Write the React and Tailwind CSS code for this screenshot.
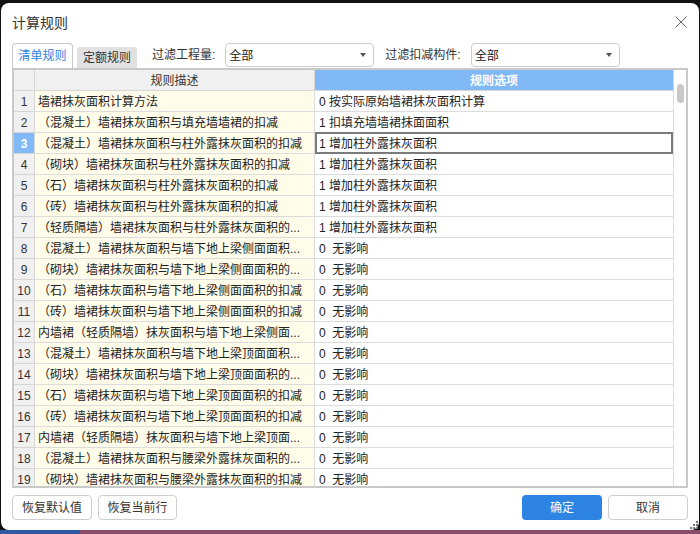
import React from 'react';

const rows = [
    ["墙裙抹灰面积计算方法", "0 按实际原始墙裙抹灰面积计算"],
    ["（混凝土）墙裙抹灰面积与填充墙墙裙的扣减", "1 扣填充墙墙裙抹面面积"],
    ["（混凝土）墙裙抹灰面积与柱外露抹灰面积的扣减", "1 增加柱外露抹灰面积"],
    ["（砌块）墙裙抹灰面积与柱外露抹灰面积的扣减", "1 增加柱外露抹灰面积"],
    ["（石）墙裙抹灰面积与柱外露抹灰面积的扣减", "1 增加柱外露抹灰面积"],
    ["（砖）墙裙抹灰面积与柱外露抹灰面积的扣减", "1 增加柱外露抹灰面积"],
    ["（轻质隔墙）墙裙抹灰面积与柱外露抹灰面积的...", "1 增加柱外露抹灰面积"],
    ["（混凝土）墙裙抹灰面积与墙下地上梁侧面面积...", "0  无影响"],
    ["（砌块）墙裙抹灰面积与墙下地上梁侧面面积的...", "0  无影响"],
    ["（石）墙裙抹灰面积与墙下地上梁侧面面积的扣减", "0  无影响"],
    ["（砖）墙裙抹灰面积与墙下地上梁侧面面积的扣减", "0  无影响"],
    ["内墙裙（轻质隔墙）抹灰面积与墙下地上梁侧面...", "0  无影响"],
    ["（混凝土）墙裙抹灰面积与墙下地上梁顶面面积...", "0  无影响"],
    ["（砌块）墙裙抹灰面积与墙下地上梁顶面面积的...", "0  无影响"],
    ["（石）墙裙抹灰面积与墙下地上梁顶面面积的扣减", "0  无影响"],
    ["（砖）墙裙抹灰面积与墙下地上梁顶面面积的扣减", "0  无影响"],
    ["内墙裙（轻质隔墙）抹灰面积与墙下地上梁顶面...", "0  无影响"],
    ["（混凝土）墙裙抹灰面积与腰梁外露抹灰面积的...", "0  无影响"],
    ["（砌块）墙裙抹灰面积与腰梁外露抹灰面积的扣减", "0  无影响"],
];

const Select = ({ width }) => (
    <div className={`${width} h-[24px] border border-[#cdcdcd] rounded-[4px] flex items-center justify-between pl-[3px] pr-[7px] text-[12px] text-[#222]`}>
        <span className="pt-[1px]">全部</span>
        <svg width="6" height="4" viewBox="0 0 6 4"><path d="M0 0h6L3 4z" fill="#555" /></svg>
    </div>
);

const App = () => {
    return (
        <div className="w-[700px] h-[534px] bg-[#111] flex flex-col pt-[3px] overflow-hidden" style={{ fontFamily: '"Liberation Sans", "Noto Sans CJK SC", sans-serif' }}>
            <div className="mx-[1px] h-[527px] bg-white rounded-[8px] flex flex-col relative">
                {/* title bar */}
                <div className="h-[40px] pl-[11px] pr-[11px] flex items-center justify-between">
                    <span className="text-[14px] text-[#333] leading-none">计算规则</span>
                    <svg width="12" height="12" viewBox="0 0 12 12" className="-mt-[2px] mr-[1px]">
                        <path d="M0.5 0.5L11.5 11.5M11.5 0.5L0.5 11.5" stroke="#666" strokeWidth="1" />
                    </svg>
                </div>

                {/* toolbar */}
                <div className="h-[25px] px-[11px] flex items-start text-[12px] leading-none">
                    <div className="w-[61px] h-[25px] border border-b-0 border-[#c8c8c8] rounded-t-[4px] flex items-center justify-center text-[#2c83dc]">清单规则</div>
                    <div className="ml-[4px] mt-[4px] w-[60px] h-[21px] bg-[#e1e1e1] rounded-t-[3px] flex items-center justify-center text-[#333] pt-[1px]">定额规则</div>
                    <span className="ml-[15px] h-[24px] flex items-center text-[#333]">过滤工程量:</span>
                    <div className="ml-[10px]"><Select width="w-[149px]" /></div>
                    <span className="ml-[11px] h-[24px] flex items-center text-[#333]">过滤扣减构件:</span>
                    <div className="ml-[10px]"><Select width="w-[149px]" /></div>
                </div>

                {/* grid */}
                <div className="mx-[11px] h-[420px] border-2 border-[#c9c9c9] flex overflow-hidden text-[12px] leading-none text-[#222]">
                    <div className="w-[660px] flex flex-col">
                        <div className="h-[21px] flex shrink-0">
                            <div className="w-[21px] bg-[#f0f0f0] border-r border-b border-[#d6d6d6]" />
                            <div className="w-[280px] bg-[#f0f0f0] border-r border-b border-[#d6d6d6] flex items-center justify-center text-[#333] pt-[1px]">规则描述</div>
                            <div className="w-[359px] bg-[#80b9f6] border-r border-b border-[#d6d6d6] flex items-center justify-center text-white font-bold pt-[1px]">规则选项</div>
                        </div>
                        {rows.map(([desc, opt], i) => {
                            const selected = i === 2;
                            return (
                                <div key={i} className="h-[21px] flex shrink-0">
                                    <div className={`w-[21px] border-r border-b border-[#d6d6d6] flex items-center justify-center pt-[1px] ${selected ? "bg-[#80b9f6] text-white font-bold" : "bg-[#f0f0f0] text-[#333]"}`}>{i + 1}</div>
                                    <div className="w-[280px] bg-[#fffcea] border-r border-b border-[#dcdcdc] flex items-center pl-[3px] pt-[1px] whitespace-nowrap overflow-hidden">{desc}</div>
                                    <div className="w-[359px] bg-white border-r border-b border-[#dcdcdc] flex items-center pl-[4px] pt-[1px] whitespace-pre relative">
                                        {opt}
                                        {selected && <div className="absolute -top-[1px] left-0 right-0 -bottom-[1px] border-2 border-[#7b7b7b]" />}
                                    </div>
                                </div>
                            );
                        })}
                    </div>
                    <div className="w-[14px] bg-white pt-[14px] flex justify-center">
                        <div className="w-[7px] h-[19px] rounded-full bg-[#c8c8c8]" />
                    </div>
                </div>

                {/* buttons */}
                <div className="mt-[7px] px-[11px] flex text-[12px] leading-none">
                    <button className="w-[80px] h-[25px] border border-[#cfcfcf] rounded-[4px] bg-white text-[#333]">恢复默认值</button>
                    <button className="ml-[6px] w-[79px] h-[25px] border border-[#cfcfcf] rounded-[4px] bg-white text-[#333]">恢复当前行</button>
                    <button className="ml-auto w-[80px] h-[25px] rounded-[4px] bg-[#2e84e2] text-white">确定</button>
                    <button className="ml-[6px] w-[80px] h-[25px] border border-[#cfcfcf] rounded-[4px] bg-white text-[#333]">取消</button>
                </div>

                <svg width="9" height="9" viewBox="0 0 9 9" className="absolute right-[1px] bottom-[1px]">
                    <rect x="7" y="1" width="2" height="2" fill="#777" />
                    <rect x="4" y="4" width="2" height="2" fill="#777" />
                    <rect x="7" y="4" width="2" height="2" fill="#777" />
                    <rect x="1" y="7" width="2" height="2" fill="#777" />
                    <rect x="4" y="7" width="2" height="2" fill="#777" />
                    <rect x="7" y="7" width="2" height="2" fill="#777" />
                </svg>
            </div>
            <div className="flex-1 flex">
                <div className="w-[80px] bg-[#2f5aa3]" />
                <div className="flex-1 bg-[#8a4a6a]" />
            </div>
        </div>
    )
}
export default App;
